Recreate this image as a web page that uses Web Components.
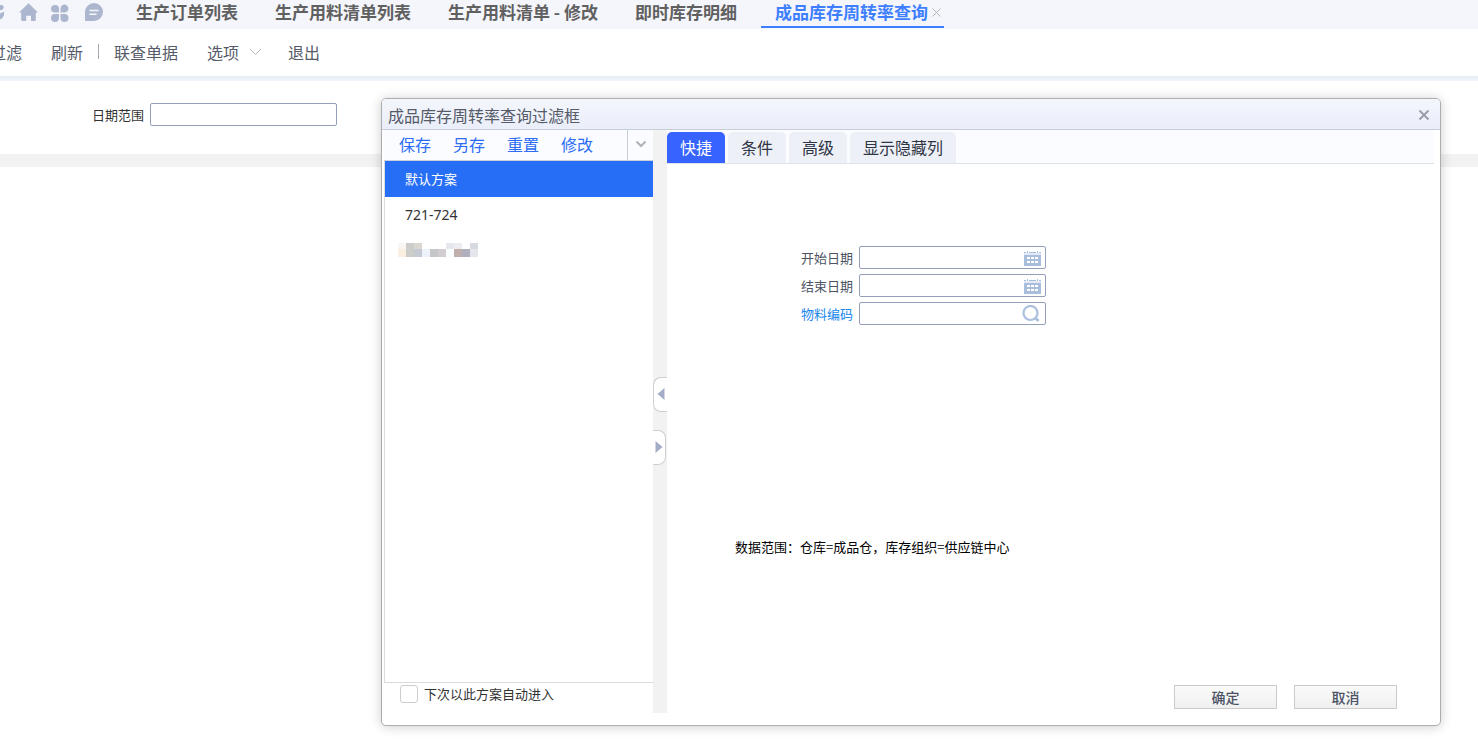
<!DOCTYPE html>
<html lang="zh-CN">
<head>
<meta charset="utf-8">
<title>成品库存周转率查询</title>
<style>
  html, body { margin: 0; height: 100%; background: #fff; overflow: hidden; }
  body { font: 13px/20px "Noto Sans", "Noto Sans CJK SC", sans-serif; color: #333; }
</style>
</head>
<body>
<erp-page>
  <tab-strip slot="tabs">
    <strip-tab>生产订单列表</strip-tab>
    <strip-tab>生产用料清单列表</strip-tab>
    <strip-tab>生产用料清单 - 修改</strip-tab>
    <strip-tab>即时库存明细</strip-tab>
    <strip-tab active>成品库存周转率查询</strip-tab>
  </tab-strip>
  <tool-bar slot="tools"></tool-bar>
  <form-field slot="filter">日期范围</form-field>
  <filter-dialog slot="dialog">
    <span slot="title">成品库存周转率查询过滤框</span>
    <scheme-list slot="schemes"></scheme-list>
    <split-bar slot="split"></split-bar>
    <quick-pane slot="pane"></quick-pane>
  </filter-dialog>
</erp-page>

<script>
const FONT = '"Noto Sans CJK SC", sans-serif';
const RESET = `
  :host, *, *::before, *::after { box-sizing: border-box; }
  button, input { font: inherit; color: inherit; margin: 0; padding: 0; border: 0; background: none; }
  button { cursor: pointer; white-space: nowrap; }
  svg { display: block; }
`;
function define(name, css, html) {
  const template = document.createElement('template');
  template.innerHTML = `<style>${RESET}${css}</style>${html}`;
  customElements.define(name, class extends HTMLElement {
    constructor() {
      super();
      this.attachShadow({ mode: 'open' }).append(template.content.cloneNode(true));
    }
  });
}

define('erp-page', `
  :host { display: block; position: relative; min-height: 100%; font-family: ${FONT}; }
  .band { height: 5px; background: linear-gradient(#e6edf6, #f1f5fc); }
  .filter { display: flex; padding: 22px 0 28px 92px; }
  .rule { height: 13px; background: #f2f2f2; }
`, `
  <header><slot name="tabs"></slot><slot name="tools"></slot></header>
  <div class="band"></div>
  <main>
    <div class="filter"><slot name="filter"></slot></div>
    <div class="rule"></div>
  </main>
  <slot name="dialog"></slot>
`);

define('tab-strip', `
  :host { display: flex; height: 29px; background: #f5f6fb; overflow: hidden; }
  .icons { flex: none; width: 115px; color: #acb6ce; }
  nav { display: flex; }
`, `
  <svg class="icons" viewBox="0 0 115 29" height="29" fill="currentColor" aria-hidden="true">
    <path d="M0 5h2.5L4 7.5 2 10H0zM0 13.5l4-2v4L1.5 19H0z"/>
    <path d="M28.5 3.2 38 12.6h-2.2V20a1 1 0 0 1-1 1H31v-5.2h-4.8V21h-4a1 1 0 0 1-1-1v-7.4H19z"/>
    <path d="M51 9a4 4 0 0 1 8 0v3.600h-4A4 4 0 0 1 51 9zM60.500 9a4 4 0 1 1 4 3.600h-4zM55 14h4v4a4 4 0 1 1-4-4zM60.500 14h4a4 4 0 1 1-4 4z"/>
    <path d="M94 3a9 9 0 1 1 0 18h-9v-9a9 9 0 0 1 9-9z"/>
    <path d="M90 10.500h8M90 14.200h6" fill="none" stroke="#f5f6fb" stroke-width="1.500" stroke-linecap="round"/>
  </svg>
  <nav><slot></slot></nav>
`);

define('strip-tab', `
  :host { display: flex; flex: none; height: 28px; margin-left: 5px; padding: 0 16px; color: #606060; font: bold 17px/24px ${FONT}; }
  :host([active]) { color: #3d7fff; border-bottom: 2px solid #3d7fff; margin-left: 8px; padding: 0 2px 0 14px; }
  .x { display: none; }
  :host([active]) .x { display: grid; place-items: center; width: 12px; margin-left: 2px; }
  button { height: 24px; }
`, `
  <button><slot></slot></button>
  <button class="x" aria-label="关闭标签"><svg width="9" height="9" stroke="#aeb3be"><path d="m.5.5 8 8m0-8-8 8"/></svg></button>
`);

define('tool-bar', `
  :host { display: block; height: 47px; background: #fff; overflow: hidden; }
  nav { display: flex; align-items: center; height: 47px; padding-bottom: 2px; gap: 29px; margin-left: -10px; font-size: 16px; line-height: 24px; color: #555b69; }
  .sep { width: 1px; height: 15px; background: #a4a8b0; margin: 0 -14px; }
  .menu { display: flex; align-items: center; gap: 10px; margin-right: -3px; }
`, `
  <nav>
    <button>过滤</button>
    <button>刷新</button>
    <span class="sep"></span>
    <button>联查单据</button>
    <button class="menu">选项<svg width="13" height="8" fill="none" stroke="#b4b8c0"><path d="m1 1 5.500 5.500L12 1"/></svg></button>
    <button>退出</button>
  </nav>
`);

define('form-field', `
  :host { display: flex; align-items: center; gap: 6px; color: #333; }
  :host([icon]) { color: #4c5364; }
  :host([lookup]) { color: #2087ed; }
  label { white-space: nowrap; }
  .box { display: flex; align-items: center; width: 187px; height: 23px; border: 1px solid #94a0ba; border-radius: 2px; background: #fff; }
  input { flex: 1; min-width: 0; height: 21px; padding: 0 4px; outline: 0; color: #333; }
  button { display: none; width: 17px; margin-right: 4px; }
  :host([icon="calendar"]) .cal, :host([icon="search"]) .find { display: block; }
  :host([icon="search"]) .find { width: 18px; margin-right: 5px; }
`, `
  <label for="value"><slot></slot></label>
  <span class="box">
    <input id="value" type="text">
    <button class="cal" aria-label="选择日期"><svg width="17" height="17" viewBox="0 0 17 17">
      <path fill="#a9bddd" d="M0 6h17v11H0zM0 3h2v1H0zM5 3h7v1H5zM15 3h2v1h-2zM3 2h1v3H3zM13 2h1v3h-1z"/>
      <path fill="#e3eaf5" d="M0 4h17v2H0z"/>
      <path fill="#fff" d="M3 8h3v2H3zm4 0h3v2H7zm4 0h3v2h-3zM3 12h3v2H3zm4 0h3v2H7zm4 0h3v2h-3z"/></svg></button>
    <button class="find" aria-label="查找物料"><svg width="18" height="18" viewBox="0 0 18 18" fill="none" stroke="#abc0df" stroke-width="2.200"><circle cx="8.500" cy="8" r="7"/><path stroke-width="2.800" d="m13 12.500 3.500 3.500"/></svg></button>
  </span>
`);

define('filter-dialog', `
  :host { position: absolute; top: 98px; left: 381px; right: 37px; border: 1px solid #acadb1; border-radius: 5px; background: #fff; box-shadow: 0 1px 12px rgba(0,0,0,.2); }
  header { display: flex; align-items: center; justify-content: space-between; height: 31px; padding: 2px 10px 0 6px; border-bottom: 1px solid #c9cdd8; border-radius: 4px 4px 0 0; background: linear-gradient(#f4f6fc, #eaeef9); font-size: 16px; line-height: 24px; color: #555b69; }
  header button { padding-bottom: 1px; }
  .body { display: grid; grid-template-columns: 271px 14px 1fr; height: 583px; margin: 0 6px 12px 0; }
`, `
  <header><slot name="title"></slot><button aria-label="关闭"><svg width="12" height="12" stroke="#9a9ea9" stroke-width="2"><path d="m1.500 1.500 9 9m0-9-9 9"/></svg></button></header>
  <div class="body"><slot name="schemes"></slot><slot name="split"></slot><slot name="pane"></slot></div>
`);

define('scheme-list', `
  :host { display: flex; flex-direction: column; padding-left: 2px; }
  .bar { display: flex; align-items: center; height: 31px; padding-left: 15px; gap: 22px; border-bottom: 1px solid #ccd0d8; background: #fafcff; color: #2c6cf6; font-size: 16px; line-height: 24px; }
  .bar button { padding-bottom: 2px; }
  .bar .more { display: grid; place-items: center; width: 26px; height: 30px; margin-left: auto; border-left: 1px solid #c9cdd4; }
  ul { flex: 1; margin: 0; padding: 0; list-style: none; border: solid #dbdbdb; border-width: 0 0 1px 1px; }
  li button { display: block; width: 100%; height: 36px; padding: 0 20px; text-align: left; }
  li .num { height: 35px; font: 14px/20px "Noto Sans", ${FONT}; }
  li .on { background: #276ef6; color: #fff; }
  li .mask { padding-left: 13px; }
  label { display: flex; align-items: center; gap: 6px; height: 30px; padding: 0 0 8px 16px; }
  input { appearance: none; width: 18px; height: 18px; border: 1px solid #cbcdd1; border-radius: 3px; background: #fff; }
`, `
  <div class="bar">
    <button>保存</button><button>另存</button><button>重置</button><button>修改</button>
    <button class="more" aria-label="更多"><svg width="12" height="8" fill="none" stroke="#b0b2b7" stroke-width="2"><path d="m1.500 1.500 4.500 4.500 4.500-4.500"/></svg></button>
  </div>
  <ul>
    <li><button class="on">默认方案</button></li>
    <li><button class="num">721-724</button></li>
    <li><button class="mask" aria-label="方案三"><svg width="80" height="14" shape-rendering="crispEdges">
      <path fill="#f8f5f3" d="M0 0h8v6H0z"/><path fill="#cccdca" d="M8 0h8v14H8z"/><path fill="#dad6d0" d="M16 0h8v6h-8z"/>
      <path fill="#e5e7ec" d="M48 0h8v6h-8z"/><path fill="#ecedf1" d="M56 0h8v6h-8z"/><path fill="#d6dae0" d="M72 0h8v6h-8z"/>
      <path fill="#faefe0" d="M0 6h8v8H0z"/><path fill="#c5c9d2" d="M16 6h8v8h-8z"/><path fill="#edf2fb" d="M24 6h8v8h-8z"/>
      <path fill="#c6c6c8" d="M32 6h8v8h-8z"/><path fill="#d2cdd0" d="M40 6h8v8h-8z"/><path fill="#fafdfe" d="M48 6h8v8h-8z"/>
      <path fill="#c0afad" d="M56 6h8v8h-8z"/><path fill="#aeb0be" d="M64 6h8v8h-8z"/><path fill="#e5e6ec" d="M72 6h8v8h-8z"/></svg></button></li>
  </ul>
  <label for="auto"><input id="auto" type="checkbox">下次以此方案自动进入</label>
`);

define('split-bar', `
  :host { display: flex; flex-direction: column; justify-content: center; gap: 18px; padding-bottom: 2px; background: #f2f2f2; }
  button { display: grid; place-items: center; height: 35px; background: #fff; border: 1px solid #cfcfcf; }
  .l { border-right: 0; border-radius: 8px 0 0 8px; }
  .r { border-left: 0; border-radius: 0 8px 8px 0; width: 13px; }
`, `
  <button class="l" aria-label="向左收起"><svg width="8" height="12" fill="#a3adc5"><path d="M7.500 0v12L.500 6z"/></svg></button>
  <button class="r" aria-label="向右展开"><svg width="8" height="12" fill="#a3adc5"><path d="M.500 0v12l7-6z"/></svg></button>
`);

define('quick-pane', `
  :host { display: flex; flex-direction: column; min-width: 0; }
  .tabs { display: flex; gap: 3px; height: 34px; padding-top: 2px; border-bottom: 1px solid #dfe2ec; background: #fafcff; font-size: 16px; line-height: 24px; color: #2e3544; }
  .tabs button { height: 31px; padding: 0 13px 2px; border-radius: 5px 5px 0 0; background: #eef0f8; }
  .tabs .on { background: #3763ff; color: #fff; }
  .fields { display: flex; flex-direction: column; gap: 5px; padding: 82px 0 0 134px; }
  p { margin: 212px 0 0 68px; color: #000; line-height: 20px; }
  footer { display: flex; justify-content: flex-end; gap: 17px; margin-top: auto; padding: 0 37px 4px 0; }
  footer button { width: 103px; height: 24px; border: 1px solid #cbcbcb; background: linear-gradient(#fafafa, #f0f0f0); font-size: 14px; font-weight: 500; line-height: 20px; color: #4b5264; }
`, `
  <div class="tabs" role="tablist">
    <button role="tab" class="on" aria-selected="true">快捷</button><button role="tab">条件</button><button role="tab">高级</button><button role="tab">显示隐藏列</button>
  </div>
  <div class="fields">
    <form-field icon="calendar">开始日期</form-field>
    <form-field icon="calendar">结束日期</form-field>
    <form-field icon="search" lookup>物料编码</form-field>
  </div>
  <p>数据范围：仓库=成品仓，库存组织=供应链中心</p>
  <footer><button>确定</button><button>取消</button></footer>
`);
</script>
</body>
</html>
